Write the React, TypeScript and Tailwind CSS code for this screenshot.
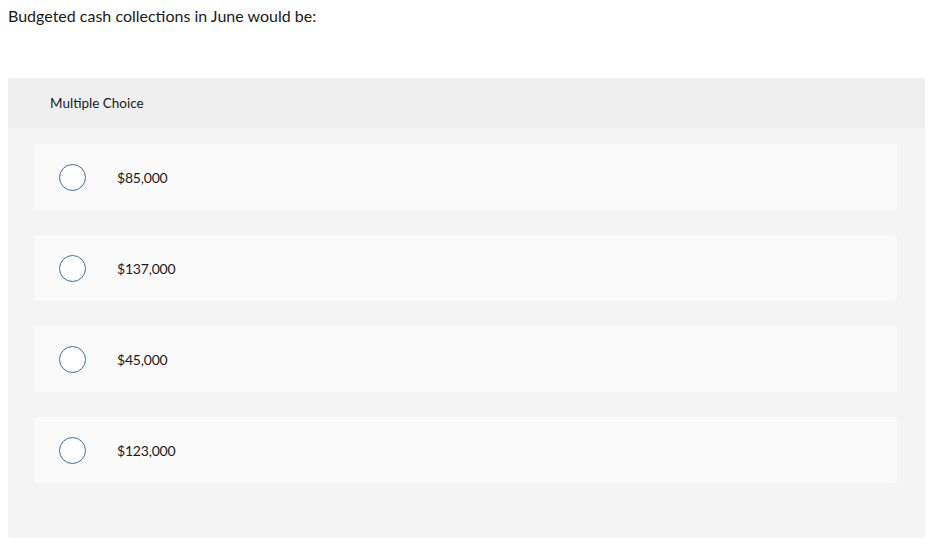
import React from "react";

const options = ["$85,000", "$137,000", "$45,000", "$123,000"];

export default function App() {
  return (
    <div className="w-[952px] h-[558px] bg-white text-[#1a1a1a]" style={{ fontFamily: "Lato, 'Liberation Sans', sans-serif" }}>
      <div className="pl-2 pt-[5px] h-[78px] text-[16px] leading-[22px]">Budgeted cash collections in June would be:</div>
      <div className="ml-2 w-[917px] h-[460px] rounded-[3px] bg-[#f4f4f4] overflow-hidden">
        <div className="h-[50px] bg-[#efefef] pl-[42px] flex items-center text-[13.5px]">Multiple Choice</div>
        <div className="flex flex-col gap-[25px] pt-4 pl-[26px] pr-[28px]">
          {options.map((o) => (
            <div key={o} className="h-[66px] bg-[#fafafa] rounded-[3px] flex items-center">
              <div className="ml-[25px] w-[27px] h-[27px] rounded-full border border-[#3b6c9e] bg-white" />
              <div className="ml-[31px] text-[14px] tracking-[-0.2px]">{o}</div>
            </div>
          ))}
        </div>
      </div>
    </div>
  );
}
